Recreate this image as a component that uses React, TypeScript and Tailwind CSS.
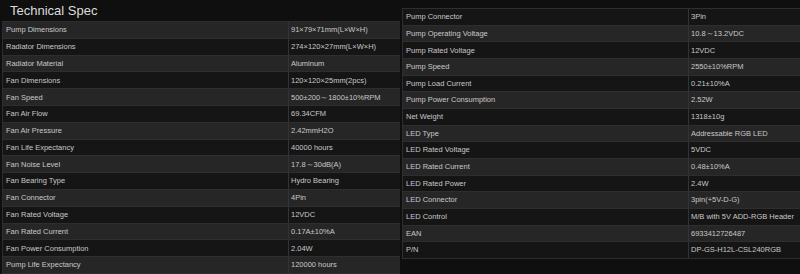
import React from 'react';

const leftSpecs: [string, string][] = [
  ['Pump Dimensions', '91×79×71mm(L×W×H)'],
  ['Radiator Dimensions', '274×120×27mm(L×W×H)'],
  ['Radiator Material', 'Aluminum'],
  ['Fan Dimensions', '120×120×25mm(2pcs)'],
  ['Fan Speed', '500±200～1800±10%RPM'],
  ['Fan Air Flow', '69.34CFM'],
  ['Fan Air Pressure', '2.42mmH2O'],
  ['Fan Life Expectancy', '40000 hours'],
  ['Fan Noise Level', '17.8～30dB(A)'],
  ['Fan Bearing Type', 'Hydro Bearing'],
  ['Fan Connector', '4Pin'],
  ['Fan Rated Voltage', '12VDC'],
  ['Fan Rated Current', '0.17A±10%A'],
  ['Fan Power Consumption', '2.04W'],
  ['Pump Life Expectancy', '120000 hours'],
];

const rightSpecs: [string, string][] = [
  ['Pump Connector', '3Pin'],
  ['Pump Operating Voltage', '10.8～13.2VDC'],
  ['Pump Rated Voltage', '12VDC'],
  ['Pump Speed', '2550±10%RPM'],
  ['Pump Load Current', '0.21±10%A'],
  ['Pump Power Consumption', '2.52W'],
  ['Net Weight', '1318±10g'],
  ['LED Type', 'Addressable RGB LED'],
  ['LED Rated Voltage', '5VDC'],
  ['LED Rated Current', '0.48±10%A'],
  ['LED Rated Power', '2.4W'],
  ['LED Connector', '3pin(+5V-D-G)'],
  ['LED Control', 'M/B with 5V ADD-RGB Header'],
  ['EAN', '6933412726487'],
  ['P/N', 'DP-GS-H12L-CSL240RGB'],
];

const SpecTable: React.FC<{ rows: [string, string][]; lightFirst: boolean; rowH: string }> = ({ rows, lightFirst, rowH }) => (
  <div className="border-l border-t border-[#2e2e2e]">
    {rows.map(([label, value], i) => {
      const light = lightFirst ? i % 2 === 0 : i % 2 === 1;
      return (
        <div
          key={label}
          className={`flex ${rowH} border-b border-[#2e2e2e] ${light ? 'bg-[#262626]' : 'bg-[#151515]'}`}
        >
          <div className="w-[286px] shrink-0 border-r border-[#333] pl-[3px] flex items-center">{label}</div>
          <div className="flex-1 pl-[2px] flex items-center whitespace-nowrap">{value}</div>
        </div>
      );
    })}
  </div>
);

const App: React.FC = () => {
  return (
    <div
      className="w-[800px] h-[274px] overflow-hidden bg-[#0f0f0f] text-[#c8c8c8] text-[7.5px] flex gap-[2px] pl-[2px]"
      style={{ fontFamily: '"Liberation Sans", Arial, sans-serif' }}
    >
      {/* Left column */}
      <div className="w-[398px] flex flex-col">
        <div className="h-[22px] pl-[8px] flex items-center text-[13px] text-[#dcdcdc]">Technical Spec</div>
        <SpecTable rows={leftSpecs} lightFirst rowH="h-[16.8px]" />
      </div>

      {/* Right column */}
      <div className="flex-1 flex flex-col pt-[8px]">
        <SpecTable rows={rightSpecs} lightFirst={false} rowH="h-[16.67px]" />
      </div>
    </div>
  );
};

export default App;
